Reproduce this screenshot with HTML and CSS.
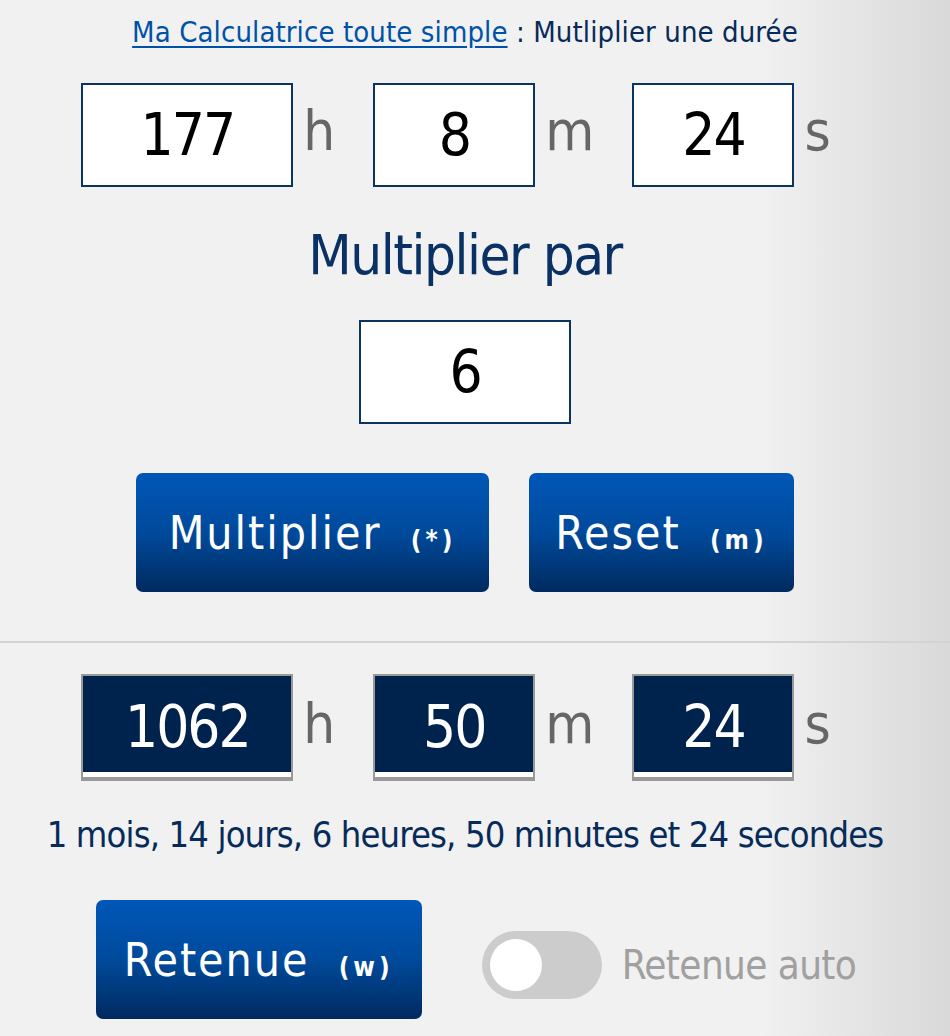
FILE: index.html
```html
<!DOCTYPE html>
<html lang="fr">
<head>
    <meta charset="UTF-8">
    <meta name="viewport" content="width=device-width, initial-scale=1.0">
    <title>Multiplier une durée - Ma Calculatrice toute simple</title>
    <link rel="stylesheet" href="styles.css">
</head>
<body>
    <main class="calc">
        <p class="title"><a href="#">Ma Calculatrice toute simple</a> : Mutliplier une durée</p>

        <div class="duree-row">
            <input class="champ champ-large" type="text" id="heures" value="177">
            <span class="unite">h</span>
            <input class="champ" type="text" id="minutes" value="8">
            <span class="unite">m</span>
            <input class="champ" type="text" id="secondes" value="24">
            <span class="unite">s</span>
        </div>

        <h2 class="sous-titre">Multiplier par</h2>

        <div class="facteur-row">
            <input class="champ champ-large" type="text" id="facteur" value="6">
        </div>

        <div class="boutons">
            <button class="btn btn-multiplier">Multiplier <small>(*)</small></button>
            <button class="btn btn-reset">Reset <small>(m)</small></button>
        </div>

        <hr class="separateur">

        <div class="duree-row resultat">
            <input class="champ champ-large" type="text" value="1062" readonly>
            <span class="unite">h</span>
            <input class="champ" type="text" value="50" readonly>
            <span class="unite">m</span>
            <input class="champ" type="text" value="24" readonly>
            <span class="unite">s</span>
        </div>

        <p class="texte-resultat">1 mois, 14 jours, 6 heures, 50 minutes et 24 secondes</p>

        <div class="retenue-row">
            <button class="btn btn-retenue">Retenue <small>(w)</small></button>
            <label class="switch">
                <input type="checkbox" id="retenueAuto">
                <span class="slider"></span>
            </label>
            <span class="switch-label">Retenue auto</span>
        </div>
    </main>
</body>
</html>
```

FILE: styles.css
```css
html, body {
    margin: 0;
    height: 100%;
}

body {
    background: linear-gradient(to right, #f1f1f1 0%, #f1f1f1 80%, #d9d9d9 100%);
    font-family: "DejaVu Sans Condensed", "Liberation Sans", sans-serif;
    color: #0a2c5a;
}

.calc {
    width: 930px;
    padding-top: 12px;
    text-align: center;
}

.title {
    margin: 0;
    font-size: 29px;
    line-height: 40px;
    letter-spacing: 0.1px;
    color: #062b5a;
}

.title a {
    color: #0051a8;
    text-decoration: underline;
    text-underline-offset: 4px;
}

.duree-row {
    display: flex;
    justify-content: center;
    align-items: center;
    margin-top: 31px;
    margin-left: -20px;
}

.champ {
    width: 162px;
    height: 104px;
    box-sizing: border-box;
    border: 2px solid #0a3560;
    background: #fff;
    font-family: inherit;
    font-size: 58px;
    letter-spacing: -2px;
    text-align: center;
    color: #000;
    padding: 0;
    outline: none;
}

.champ-large {
    width: 212px;
}

.unite {
    padding: 0 40px 0 10px;
    font-size: 56px;
    letter-spacing: -2px;
    line-height: 1;
    margin-top: -8px;
    color: #666;
}

.duree-row .unite:last-child {
    padding-right: 0;
}

.sous-titre {
    margin: 32px 0 0;
    font-size: 56px;
    line-height: 72px;
    letter-spacing: -1.5px;
    font-weight: normal;
    color: #0a3163;
}

.facteur-row {
    margin-top: 29px;
}

.boutons {
    display: flex;
    justify-content: center;
    gap: 40px;
    margin-top: 49px;
}

.btn {
    height: 119px;
    border: none;
    border-radius: 7px;
    background: linear-gradient(to bottom, #0057b8 0%, #004a9c 50%, #002a5f 100%);
    color: #fff;
    font-family: inherit;
    font-size: 46px;
    letter-spacing: 2px;
    cursor: pointer;
}

.btn small {
    font-size: 26px;
    font-weight: bold;
    letter-spacing: 4px;
    margin-left: 14px;
}

.btn-multiplier {
    width: 353px;
}

.btn-reset {
    width: 265px;
}

.separateur {
    margin: 49px 0 0;
    width: 950px;
    border: none;
    border-top: 2px solid #d3d3d3;
}

.resultat {
    margin-top: 31px;
}

.resultat .champ {
    height: 107px;
    background: #00234e;
    color: #fff;
    border: 2px solid #999;
    border-bottom-width: 4px;
    box-shadow: inset 0 -5px 0 #fff;
}

.texte-resultat {
    margin: 30px 0 0;
    font-size: 36px;
    line-height: 48px;
    letter-spacing: -0.85px;
    color: #062b5a;
}

.retenue-row {
    display: flex;
    justify-content: center;
    align-items: center;
    margin-top: 41px;
    margin-left: 22px;
}

.btn-retenue {
    width: 326px;
}

.switch {
    position: relative;
    display: inline-block;
    width: 120px;
    height: 68px;
    margin-left: 60px;
    margin-top: 10px;
}

.switch input {
    display: none;
}

.slider {
    position: absolute;
    inset: 0;
    background: #ccc;
    border-radius: 34px;
}

.slider::before {
    content: "";
    position: absolute;
    width: 52px;
    height: 52px;
    left: 8px;
    top: 8px;
    background: #fff;
    border-radius: 50%;
}

.switch-label {
    margin-left: 20px;
    margin-top: 10px;
    font-size: 40px;
    letter-spacing: -0.6px;
    color: #a0a0a0;
}
```
